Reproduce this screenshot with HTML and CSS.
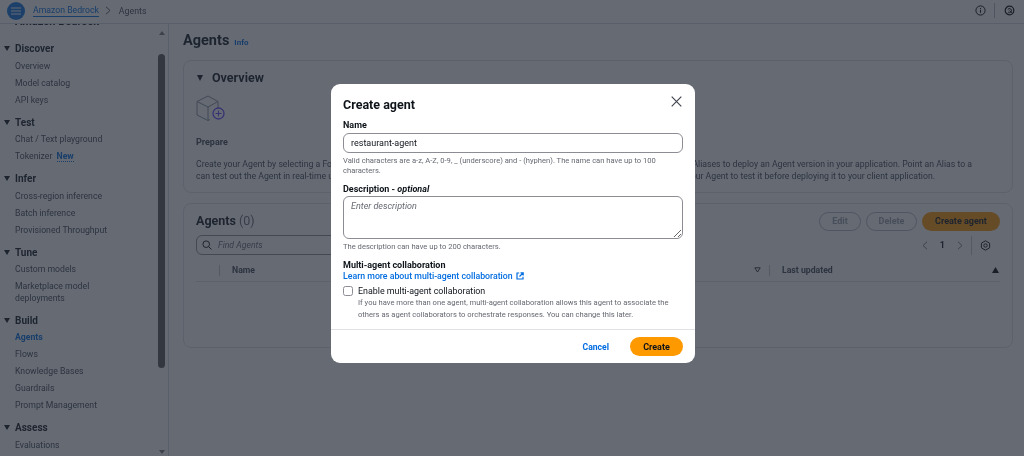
FILE: index.html
```html
<!DOCTYPE html>
<html lang="en">
<head>
    <meta charset="UTF-8">
    <title>Agents | Amazon Bedrock</title>
    <link rel="stylesheet" href="styles.css">
</head>
<body>
    <div class="app">
        <header class="topbar">
            <button class="menu-btn" aria-label="Menu">
                <svg width="10" height="8" viewBox="0 0 10 8"><path d="M0 1h10M0 4h10M0 7h10" stroke="#fff" stroke-width="1.1"/></svg>
            </button>
            <a class="crumb" href="#">Amazon Bedrock</a>
            <svg class="crumb-sep" width="6" height="9" viewBox="0 0 6 9"><path d="M1 .8 5 4.5 1 8.200" fill="none" stroke="#555" stroke-width="1"/></svg>
            <span class="crumb-current">Agents</span>
            <div class="topbar-icons">
                <svg width="11" height="11" viewBox="0 0 11 11"><circle cx="5.5" cy="5.5" r="4.6" fill="none" stroke="#000" stroke-width="1"/><path d="M5.5 4.8v3M5.5 3v1" stroke="#000" stroke-width="1"/></svg>
                <i class="topbar-divider"></i>
                <svg width="11" height="11" viewBox="0 0 11 11"><circle cx="5.5" cy="5.5" r="4.300" fill="none" stroke="#000" stroke-width="1.200"/><path d="M3.800 4.500a2 2 0 1 1 .3 2.500M5.500 5.500l2.800 2.500" fill="none" stroke="#000" stroke-width="1"/></svg>
            </div>
        </header>

        <div class="layout">
            <aside class="sidebar">
                <nav class="nav">
                    <div class="nav-brand">Amazon Bedrock</div>

                    <h3 class="nav-title">Discover</h3>
                    <ul class="nav-list">
                        <li>Overview</li>
                        <li>Model catalog</li>
                        <li>API keys</li>
                    </ul>

                    <h3 class="nav-title">Test</h3>
                    <ul class="nav-list">
                        <li>Chat / Text playground</li>
                        <li>Tokenizer <a class="new-tag" href="#">New</a></li>
                    </ul>

                    <h3 class="nav-title">Infer</h3>
                    <ul class="nav-list">
                        <li>Cross-region inference</li>
                        <li>Batch inference</li>
                        <li>Provisioned Throughput</li>
                    </ul>

                    <h3 class="nav-title">Tune</h3>
                    <ul class="nav-list">
                        <li>Custom models</li>
                        <li>Marketplace model<br>deployments</li>
                    </ul>

                    <h3 class="nav-title">Build</h3>
                    <ul class="nav-list">
                        <li class="active">Agents</li>
                        <li>Flows</li>
                        <li>Knowledge Bases</li>
                        <li>Guardrails</li>
                        <li>Prompt Management</li>
                    </ul>

                    <h3 class="nav-title">Assess</h3>
                    <ul class="nav-list">
                        <li>Evaluations</li>
                    </ul>
                </nav>
                <div class="scrollbar">
                    <span class="arrow-up"></span>
                    <span class="thumb"></span>
                    <span class="arrow-down"></span>
                </div>
            </aside>

            <main class="content">
                <div class="page-head">
                    <h1>Agents</h1>
                    <a href="#">Info</a>
                </div>

                <section class="card overview">
                    <h2 class="overview-title">Overview</h2>
                    <svg class="cube" width="30" height="27" viewBox="0 0 30 27">
                        <path d="M1 6.5 12 1l10 5.500V13M1 6.500V20l11 5.500 2-1M1 6.500 12 12l10-5.500M12 12v13.500" fill="none" stroke="#8a8f99" stroke-width="1"/>
                        <circle cx="22.500" cy="18.500" r="5.500" fill="none" stroke="#6842ff" stroke-width="1.300"/>
                        <path d="M22.500 15.500v6M19.500 18.500h6" stroke="#6842ff" stroke-width="1"/>
                    </svg>
                    <h4>Prepare</h4>
                    <div class="overview-line">
                        <span>Create your Agent by selecting a Foundation Model for it to use and giving it instructions</span>
                        <span>Aliases to deploy an Agent version in your application. Point an Alias to a</span>
                    </div>
                    <div class="overview-line second">
                        <span>can test out the Agent in real-time using the built-in test window in the console</span>
                        <span>your Agent to test it before deploying it to your client application.</span>
                    </div>
                </section>

                <section class="card agents">
                    <div class="agents-head">
                        <h2>Agents <span>(0)</span></h2>
                        <div class="actions">
                            <button class="btn btn-edit">Edit</button>
                            <button class="btn btn-delete">Delete</button>
                            <button class="btn primary">Create agent</button>
                        </div>
                    </div>
                    <div class="filter-row">
                        <div class="search">
                            <svg width="10" height="10" viewBox="0 0 10 10"><circle cx="4.200" cy="4.200" r="3.300" fill="none" stroke="#111" stroke-width="1"/><path d="M6.700 6.700 9.500 9.500" stroke="#111" stroke-width="1"/></svg>
                            <em>Find Agents</em>
                        </div>
                        <div class="pager">
                            <svg width="6" height="9" viewBox="0 0 6 9"><path d="M5 .8 1 4.500 5 8.200" fill="none" stroke="#777" stroke-width="1"/></svg>
                            <b>1</b>
                            <svg width="6" height="9" viewBox="0 0 6 9"><path d="M1 .8 5 4.500 1 8.200" fill="none" stroke="#777" stroke-width="1"/></svg>
                            <i class="pager-divider"></i>
                            <svg class="gear" width="11" height="11" viewBox="0 0 11 11"><path d="M5.500.8 9.600 3.200v4.600L5.500 10.200 1.400 7.800V3.200z" fill="none" stroke="#111" stroke-width="1"/><circle cx="5.500" cy="5.500" r="1.700" fill="none" stroke="#111" stroke-width="1"/></svg>
                        </div>
                    </div>
                    <div class="table-head">
                        <i class="col-divider"></i>
                        <span class="col-name">Name</span>
                        <svg width="7" height="6" viewBox="0 0 7 6"><path d="M.8.800h5.400L3.500 5z" fill="none" stroke="#333" stroke-width="1"/></svg>
                        <i class="col-divider"></i>
                        <span class="col-updated">Last updated</span>
                        <svg width="7" height="6" viewBox="0 0 7 6"><path d="M0 6h7L3.500 0z" fill="#000"/></svg>
                    </div>
                </section>
            </main>
        </div>
    </div>

    <div class="overlay">
        <form class="modal">
            <div class="modal-head">
                <h2>Create agent</h2>
                <svg width="11" height="11" viewBox="0 0 11 11"><path d="M.7.700l9.600 9.600M10.300.700.700 10.300" stroke="#424650" stroke-width="1.200"/></svg>
            </div>

            <label class="field-label" for="name">Name</label>
            <input class="text-input" id="name" value="restaurant-agent">
            <p class="hint">Valid characters are a-z, A-Z, 0-9, _ (underscore) and - (hyphen). The name can have up to 100 characters.</p>

            <label class="field-label desc-label" for="desc">Description - <em>optional</em></label>
            <textarea class="text-area" id="desc" placeholder="Enter description"></textarea>
            <p class="hint">The description can have up to 200 characters.</p>

            <div class="field-label multi-label">Multi-agent collaboration</div>
            <a class="learn" href="#">Learn more about multi-agent collaboration
                <svg width="8" height="8" viewBox="0 0 8 8"><path d="M3.200 1H1v6h6V4.800M4.500.8h2.700v2.700M7 1 3.500 4.500" fill="none" stroke="#006ce0" stroke-width="1.200"/></svg>
            </a>
            <label class="check-row">
                <input type="checkbox">
                <span class="check-text">
                    <span class="check-label">Enable multi-agent collaboration</span>
                    <small>If you have more than one agent, multi-agent collaboration allows this agent to associate the others as agent collaborators to orchestrate responses. You can change this later.</small>
                </span>
            </label>

            <div class="modal-foot">
                <a class="cancel" href="#">Cancel</a>
                <button class="create" type="button">Create</button>
            </div>
        </form>
    </div>
</body>
</html>
```

FILE: styles.css
```css
* {
    box-sizing: border-box;
}

html, body {
    margin: 0;
    height: 100%;
    overflow: hidden;
}

body {
    font-family: Roboto, sans-serif;
    font-size: 8.700px;
    color: #0f141a;
    background: #fff;
}

h1, h2, h3, h4, p, ul {
    margin: 0;
    padding: 0;
}

a {
    color: #006ce0;
    text-decoration: none;
}

.app {
    height: 456px;
    display: flex;
    flex-direction: column;
    filter: blur(.4px);
}

/* top bar */
.topbar {
    height: 24px;
    display: flex;
    align-items: center;
    padding: 0 9px 2px 7px;
    border-bottom: 1px solid #d8dbe0;
    flex-shrink: 0;
}

.menu-btn {
    width: 18px;
    height: 18px;
    border: 0;
    padding: 0;
    border-radius: 50%;
    background: #0a72e0;
    display: flex;
    align-items: center;
    justify-content: center;
    margin-right: 8px;
}

.crumb {
    font-size: 8.700px;
    border-bottom: 1px solid #006ce0;
    line-height: 11px;
}

.crumb-sep {
    margin: 0 8px 0 6px;
}

.crumb-current {
    font-size: 8.800px;
    color: #424650;
}

.topbar-icons {
    margin-left: auto;
    display: flex;
    align-items: center;
}

.topbar-divider {
    width: 1px;
    height: 15px;
    background: #b4b8bf;
    margin: 0 9px 0 8px;
}

/* side nav */
.layout {
    flex: 1;
    display: flex;
    min-height: 0;
}

.sidebar {
    width: 169px;
    flex-shrink: 0;
    display: flex;
    border-right: 1px solid #d8dbe0;
    overflow: hidden;
}

.nav {
    flex: 1;
    padding-left: 15px;
    margin-top: -9px;
}

.nav-brand {
    font-size: 11px;
    font-weight: 700;
    line-height: 14px;
    height: 20px;
}

.nav-title {
    position: relative;
    font-size: 10px;
    font-weight: 700;
    line-height: 17px;
    margin-top: 5.400px;
    color: #0f141a;
}

.nav-title::before {
    content: "";
    position: absolute;
    left: -11px;
    top: 6px;
    border-left: 3.500px solid transparent;
    border-right: 3.500px solid transparent;
    border-top: 5px solid #0f141a;
}

.nav-list {
    list-style: none;
    font-size: 8.700px;
    line-height: 12px;
    color: #424650;
}

.nav-list li {
    padding: 2.500px 0;
}

.nav-list .active {
    color: #006ce0;
    font-weight: 700;
}

.new-tag {
    font-weight: 700;
    margin-left: 2px;
    border-bottom: 1px dotted #006ce0;
}

.scrollbar {
    width: 7px;
    margin-right: 3px;
    display: flex;
    flex-direction: column;
    align-items: center;
    padding: 7px 0 2px;
}

.arrow-up {
    border-left: 3px solid transparent;
    border-right: 3px solid transparent;
    border-bottom: 4px solid #777;
}

.thumb {
    width: 7px;
    height: 314px;
    margin-top: 19px;
    border-radius: 4px;
    background: #555;
}

.arrow-down {
    margin-top: auto;
    border-left: 3px solid transparent;
    border-right: 3px solid transparent;
    border-top: 4px solid #777;
}

/* main */
.content {
    flex: 1;
    padding: 7px 11px 0 14px;
    min-width: 0;
}

.page-head {
    display: flex;
    align-items: baseline;
    gap: 5px;
    height: 29px;
}

.page-head h1 {
    font-size: 14.500px;
    font-weight: 700;
    line-height: 20px;
}

.page-head a {
    font-size: 8px;
    font-weight: 700;
}

.card {
    border: 1px solid #dfe1e5;
    border-radius: 8px;
    padding: 0 12px;
}

.overview {
    height: 133px;
    margin-bottom: 10px;
    padding-top: 9px;
    overflow: hidden;
}

.overview-title {
    position: relative;
    font-size: 12.500px;
    font-weight: 700;
    line-height: 16px;
    padding-left: 16px;
}

.overview-title::before {
    content: "";
    position: absolute;
    left: 1px;
    top: 5px;
    border-left: 3.500px solid transparent;
    border-right: 3.500px solid transparent;
    border-top: 6px solid #0f141a;
}

.cube {
    display: block;
    margin-top: 9px;
}

.overview h4 {
    font-size: 9px;
    font-weight: 700;
    line-height: 12px;
    margin-top: 14px;
    color: #424650;
}

.overview-line {
    display: flex;
    justify-content: space-between;
    width: 776px;
    line-height: 12px;
    margin-top: 10px;
    color: #424650;
}

.overview-line.second {
    margin-top: 0;
    width: 739px;
}

.agents {
    height: 145px;
    padding-top: 7px;
}

.agents-head {
    display: flex;
    justify-content: space-between;
    align-items: center;
}

.agents-head h2 {
    font-size: 12.500px;
    font-weight: 700;
    line-height: 20px;
}

.agents-head h2 span {
    font-weight: 400;
    color: #656871;
}

.actions {
    display: flex;
    gap: 5px;
}

.btn {
    height: 19px;
    padding: 0;
    border: 1px solid #b4b8bf;
    border-radius: 10px;
    background: transparent;
    font: 700 9px Roboto, sans-serif;
    color: #9ba0a8;
}

.btn-edit {
    width: 42px;
}

.btn-delete {
    width: 51px;
}

.btn.primary {
    border: 0;
    width: 78px;
    background: #ff9900;
    color: #0f141a;
}

.filter-row {
    display: flex;
    justify-content: space-between;
    align-items: center;
    margin-top: 4px;
}

.search {
    width: 400px;
    height: 20px;
    border: 1px solid #8c8c94;
    border-radius: 6px;
    display: flex;
    align-items: center;
    gap: 6px;
    padding-left: 5px;
    color: #656871;
}

.pager {
    display: flex;
    align-items: center;
    gap: 12px;
    padding-right: 9px;
}

.pager b {
    font-size: 9px;
}

.pager-divider {
    width: 1px;
    height: 19px;
    margin-left: -4px;
    background: #c6c6cd;
}

.gear {
    margin-left: -4px;
}

.table-head {
    display: flex;
    align-items: center;
    height: 21px;
    margin-top: 6px;
    padding-bottom: 2px;
    border-bottom: 1px solid #dfe1e5;
    font-weight: 700;
    color: #424650;
}

.col-divider {
    width: 1px;
    height: 11px;
    background: #c6c6cd;
}

.table-head .col-divider:first-child {
    margin-left: 23px;
    margin-right: 12px;
}

.col-name {
    width: 522px;
}

.table-head svg:nth-of-type(1) {
    margin-right: 8px;
}

.col-updated {
    margin-left: 12px;
    width: 210px;
}

/* modal */
.overlay {
    position: fixed;
    inset: 0;
    background: rgba(35, 43, 55, .7);
    display: flex;
    justify-content: center;
    align-items: flex-start;
    padding: 84px 0 0 2px;
}

.modal {
    width: 364px;
    height: 279px;
    background: #fff;
    border-radius: 9px;
    padding: 13px 12px 0;
    filter: blur(.25px);
}

.modal-head {
    display: flex;
    justify-content: space-between;
    align-items: flex-start;
}

.modal-head h2 {
    font-size: 12.500px;
    font-weight: 700;
    line-height: 16px;
}

.modal-head svg {
    margin: -1px 1px 0 0;
}

.field-label {
    display: block;
    font-size: 9px;
    font-weight: 700;
    line-height: 12px;
    margin-top: 6px;
}

.field-label em {
    font-weight: 700;
}

.text-input,
.text-area {
    display: block;
    width: 100%;
    border: 1px solid #8c8c94;
    border-radius: 6px;
    background: #fff;
    font: 9px Roboto, sans-serif;
    color: #0f141a;
    outline: 0;
    padding: 0 7px;
}

.text-input {
    height: 20px;
    margin-top: 2px;
}

.text-area {
    height: 43px;
    margin-top: 1px;
    padding-top: 4px;
    resize: vertical;
}

.text-area::placeholder {
    font-style: italic;
    color: #656871;
}

.hint {
    font-size: 7.600px;
    line-height: 10px;
    color: #656871;
    margin-top: 3px;
}

.desc-label {
    margin-top: 7px;
}

.multi-label {
    margin-top: 7px;
}

.learn {
    display: flex;
    align-items: center;
    gap: 3px;
    font-size: 8.750px;
    font-weight: 500;
    line-height: 12px;
    margin-top: -1px;
}

.check-row {
    display: flex;
    gap: 5px;
    margin-top: 3px;
}

.check-row input {
    appearance: none;
    width: 10px;
    height: 10px;
    margin: 1px 0 0;
    border: 1px solid #8c8c94;
    border-radius: 2.500px;
    flex-shrink: 0;
}

.check-text {
    display: block;
}

.check-label {
    display: block;
    font-size: 8.900px;
    line-height: 12px;
}

.check-text small {
    display: block;
    font-size: 7.600px;
    line-height: 12px;
    color: #656871;
}

.modal-foot {
    display: flex;
    justify-content: flex-end;
    align-items: center;
    gap: 21px;
    margin: 8px -12px 0;
    padding: 7px 12px 0;
    border-top: 1px solid #dfe1e5;
}

.cancel {
    font-size: 8.600px;
    font-weight: 700;
}

.create {
    width: 53px;
    height: 19px;
    border: 0;
    border-radius: 10px;
    background: #ff9900;
    font: 700 9px Roboto, sans-serif;
    color: #0f141a;
}
```
